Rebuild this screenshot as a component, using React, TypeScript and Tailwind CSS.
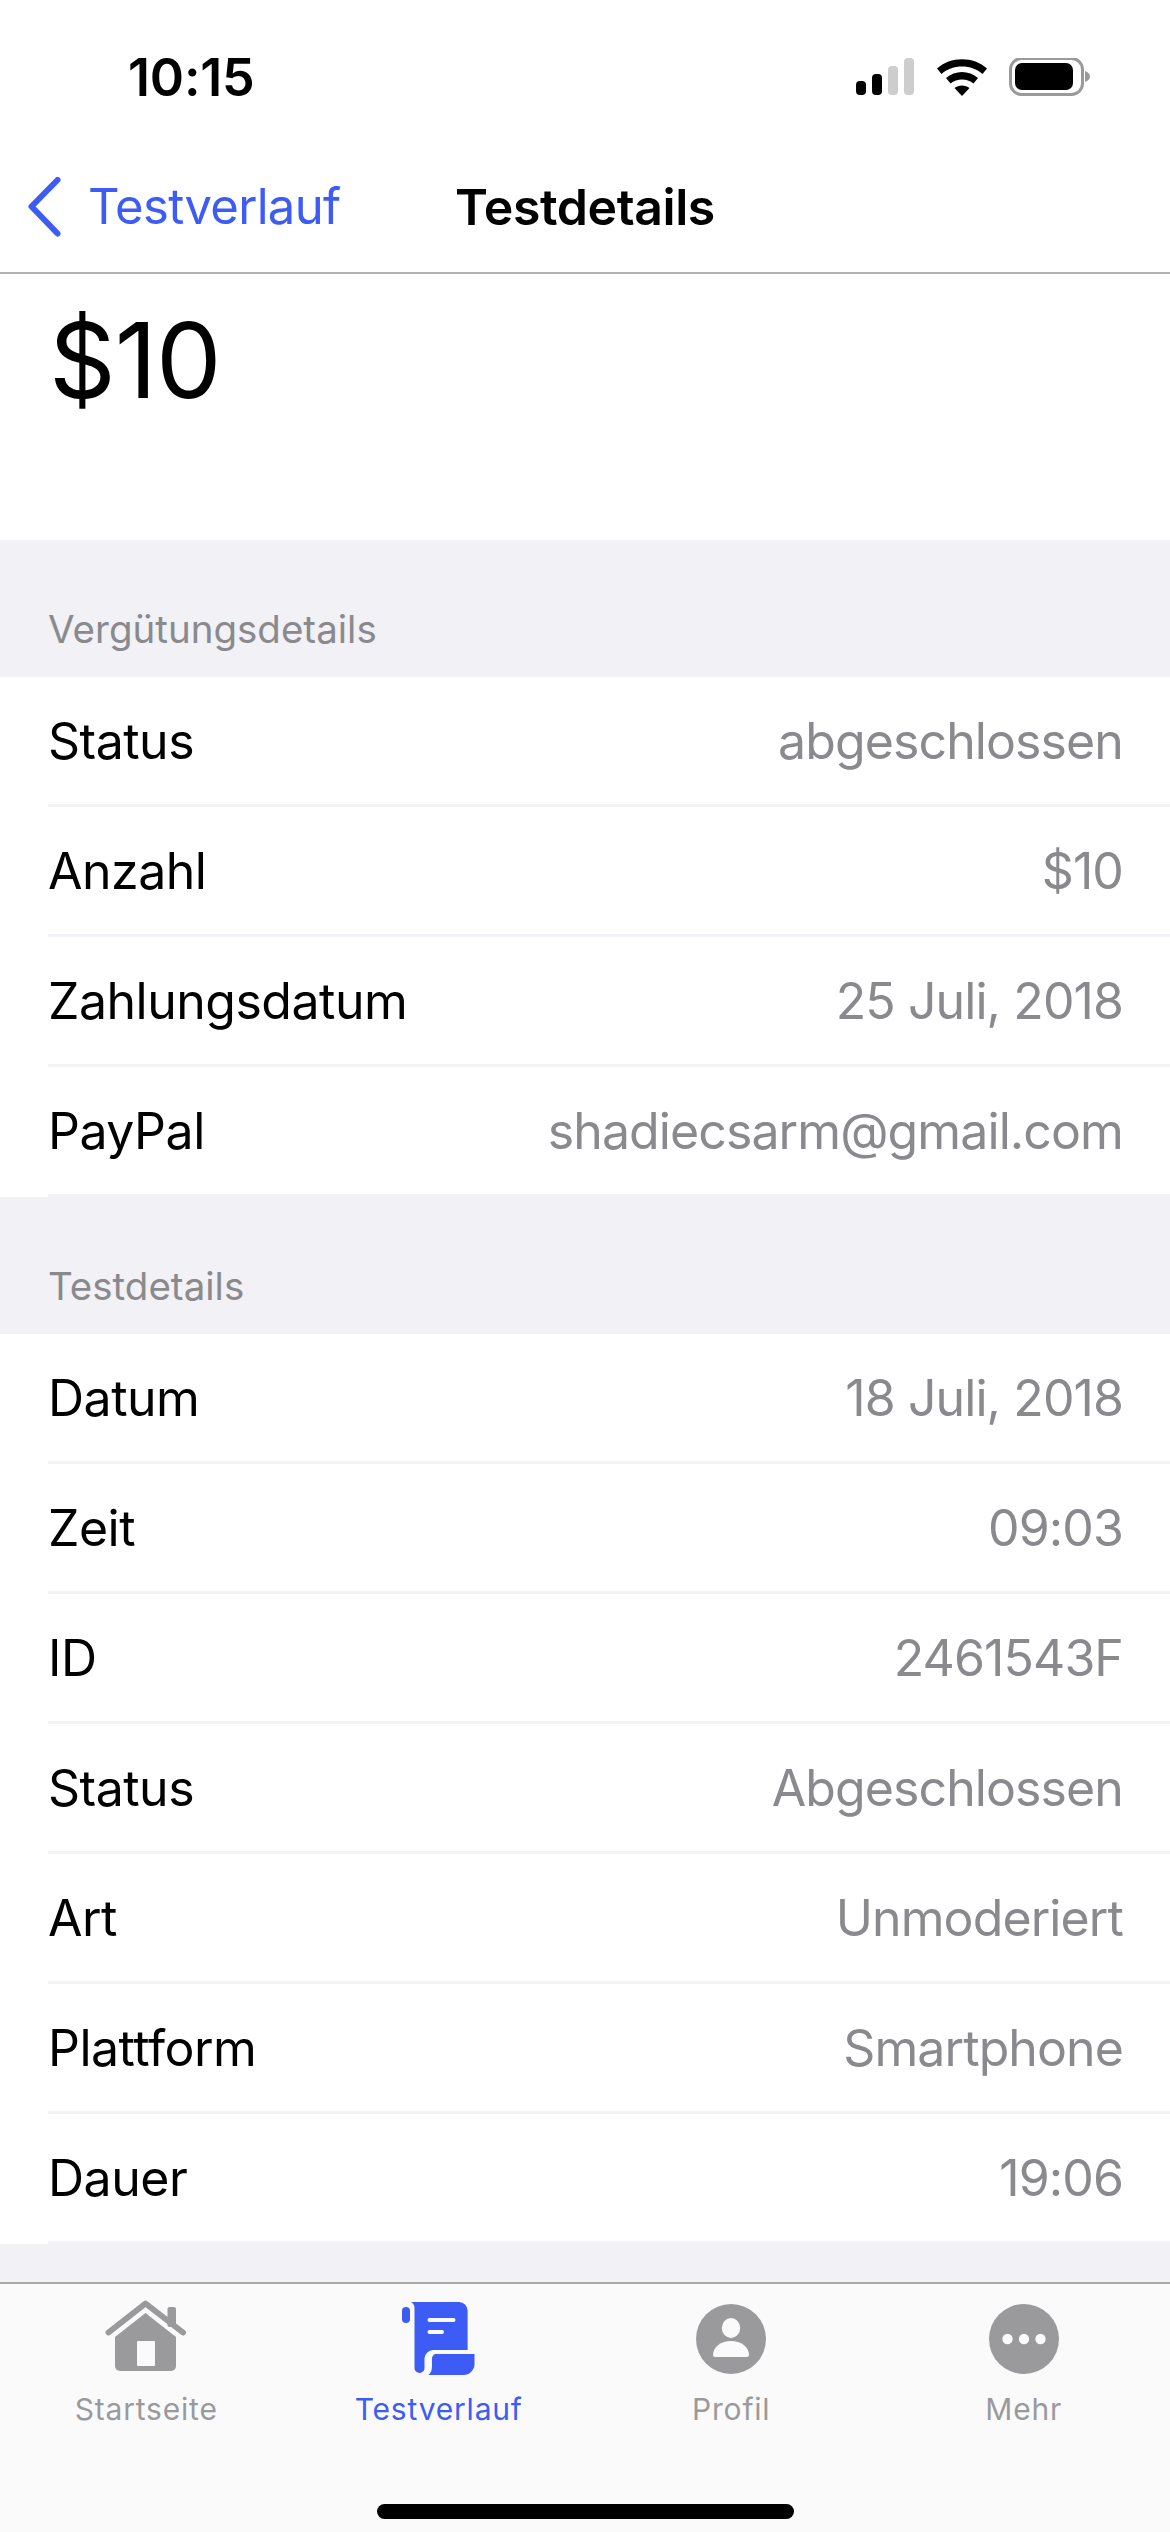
import React from 'react';

const payment = [
  ['Status', 'abgeschlossen'],
  ['Anzahl', '$10'],
  ['Zahlungsdatum', '25 Juli, 2018'],
  ['PayPal', 'shadiecsarm@gmail.com'],
];

const test = [
  ['Datum', '18 Juli, 2018'],
  ['Zeit', '09:03'],
  ['ID', '2461543F'],
  ['Status', 'Abgeschlossen'],
  ['Art', 'Unmoderiert'],
  ['Plattform', 'Smartphone'],
  ['Dauer', '19:06'],
];

const StatusIcons = () => (
  <svg width="235" height="40" viewBox="0 0 235 40">
    <rect x="0" y="23" width="10" height="14" rx="4" fill="#000" />
    <rect x="16" y="16" width="10" height="21" rx="4" fill="#000" />
    <rect x="32" y="8" width="10" height="29" rx="4" fill="#cdcdcd" />
    <rect x="48" y="0" width="10" height="37" rx="4" fill="#cdcdcd" />
    <path d="M81 10.500C94 -2 118 -2 131 10.500L126.500 16C116 6 96 6 85.500 16Z" fill="#000" />
    <path d="M90 20C99 12 113 12 122 20L117.500 25.500C111 20 101 20 94.500 25.500Z" fill="#000" />
    <path d="M98.500 30C102.500 26.500 109.500 26.500 113.500 30L106 38Z" fill="#000" />
    <rect x="154.500" y="0.500" width="72" height="36" rx="11" fill="none" stroke="#9a9a9a" strokeWidth="3" />
    <rect x="159" y="5" width="58" height="27" rx="7" fill="#000" />
    <path d="M229 13C232 14 234 16 234 18.500C234 21 232 23 229 24Z" fill="#9a9a9a" />
  </svg>
);

const Row = ({ label, value }: { label: string; value: string }) => (
  <div className="ml-[48px] pr-[47px] pt-[1px] h-[130px] border-b-[3px] border-[#f2f2f7] flex items-center justify-between">
    <span className="text-[50px] text-black tracking-[-0.5px]">{label}</span>
    <span className="text-[50px] text-[#8a8a8e] tracking-[-0.9px]">{value}</span>
  </div>
);

const SectionTitle = ({ title }: { title: string }) => (
  <div className="h-[137px] bg-[#f1f1f6] flex items-end pl-[48px] pb-[25px]">
    <span className="text-[38.500px] leading-[46px] text-[#8a8a8e]">{title}</span>
  </div>
);

const HomeIcon = () => (
  <svg width="82" height="74" viewBox="0 0 82 74">
    <path d="M3.500 32.500L40.500 3.500L78 32.500" fill="none" stroke="#9a9a9c" strokeWidth="6" strokeLinecap="round" strokeLinejoin="round" />
    <rect x="62.500" y="7" width="8.500" height="20" rx="2" fill="#9a9a9c" />
    <path d="M10 37L40.500 13L71 37V66a5 5 0 0 1-5 5H15a5 5 0 0 1-5-5Z" fill="#9a9a9c" />
    <rect x="32" y="41" width="18" height="25" rx="1" fill="#fafafb" />
  </svg>
);

const ScrollIcon = () => (
  <svg width="74" height="74" viewBox="0 0 74 74" fill="#3d5cf5" className="-mb-[2px]">
    <rect x="0" y="5" width="8" height="16" rx="4" />
    <path d="M9 0H57a8.600 8.600 0 0 1 8.600 8.600V48H31a9 9 0 0 0-8.500 8V66a5 5 0 0 1-10 0V6C12.500 3 11 1 9 0Z" />
    <path d="M33 52H72.500V62a11 11 0 0 1-11 11H26.500C29 71 30 68 30 64V58a6 6 0 0 1 3-6Z" />
    <rect x="25.500" y="16" width="28" height="4" rx="2" fill="#fafafb" />
    <rect x="25.500" y="28" width="16.500" height="4" rx="2" fill="#fafafb" />
  </svg>
);

const ProfileIcon = () => (
  <svg width="70" height="70" viewBox="0 0 70 70">
    <circle cx="35" cy="35" r="35" fill="#9a9a9c" />
    <ellipse cx="35" cy="24" rx="9.200" ry="10" fill="#fafafb" />
    <path d="M17 51C17 43 25 37 35 37C45 37 53 43 53 51Q53 53 51 53H19Q17 53 17 51Z" fill="#fafafb" />
  </svg>
);

const MoreIcon = () => (
  <svg width="70" height="70" viewBox="0 0 70 70" fill="#fafafb">
    <circle cx="35" cy="35" r="35" fill="#9a9a9c" />
    <circle cx="18.500" cy="35" r="5.200" />
    <circle cx="35" cy="35" r="5.200" />
    <circle cx="51.500" cy="35" r="5.200" />
  </svg>
);

const Tab = ({ icon, label, active }: { icon: React.ReactNode; label: string; active?: boolean }) => (
  <div className="flex flex-col items-center">
    <div className="h-[90px] flex items-end justify-center">{icon}</div>
    <span className={`mt-[17px] text-[30px] leading-[36px] tracking-[0.8px] ${active ? 'text-[#3d5cf5]' : 'text-[#9a9a9c]'}`}>
      {label}
    </span>
  </div>
);

export default function App() {
  return (
    <div className="w-[1170px] h-[2532px] flex flex-col bg-white font-['Inter',sans-serif]">
      {/* status bar */}
      <div className="h-[156px] flex items-center justify-between pl-[128px] pr-[79px] shrink-0">
        <span className="text-[52px] font-semibold tracking-[-0.2px] text-black">10:15</span>
        <StatusIcons />
      </div>

      {/* nav */}
      <div className="h-[118px] shrink-0 grid grid-cols-[1fr_auto_1fr] items-center pb-[14px] px-[28px] border-b-2 border-[#b3b3b3]">
        <div className="flex items-center gap-[27px]">
          <svg width="33" height="60" viewBox="0 0 33 60" fill="none">
            <path d="M29.500 3L3.500 29.500L29.500 56.500" stroke="#3d5cf5" strokeWidth="6" strokeLinecap="round" strokeLinejoin="round" />
          </svg>
          <span className="text-[49px] text-[#3d5cf5] tracking-[-0.7px]">Testverlauf</span>
        </div>
        <span className="text-[50px] font-semibold text-black tracking-[-0.4px]">Testdetails</span>
        <div />
      </div>

      {/* amount */}
      <div className="h-[266px] shrink-0 pl-[49px] pt-[31px]">
        <span className="text-[104px] leading-[110px] text-black tracking-[-1px]">$10</span>
      </div>

      <div className="flex-1 bg-[#f1f1f6] flex flex-col">
        <SectionTitle title="Vergütungsdetails" />
        <div className="bg-white">
          {payment.map(([label, value]) => (
            <Row key={label} label={label} value={value} />
          ))}
        </div>
        <SectionTitle title="Testdetails" />
        <div className="bg-white">
          {test.map(([label, value]) => (
            <Row key={label} label={label} value={value} />
          ))}
        </div>
      </div>

      {/* tab bar */}
      <div className="h-[250px] shrink-0 bg-[#fafafb] border-t-2 border-[#a9a9ab] flex flex-col">
        <div className="grid grid-cols-4">
          <Tab icon={<HomeIcon />} label="Startseite" />
          <Tab icon={<ScrollIcon />} label="Testverlauf" active />
          <Tab icon={<ProfileIcon />} label="Profil" />
          <Tab icon={<MoreIcon />} label="Mehr" />
        </div>
        <div className="mt-[77px] mx-auto w-[417px] h-[15px] rounded-full bg-black" />
      </div>
    </div>
  );
}
